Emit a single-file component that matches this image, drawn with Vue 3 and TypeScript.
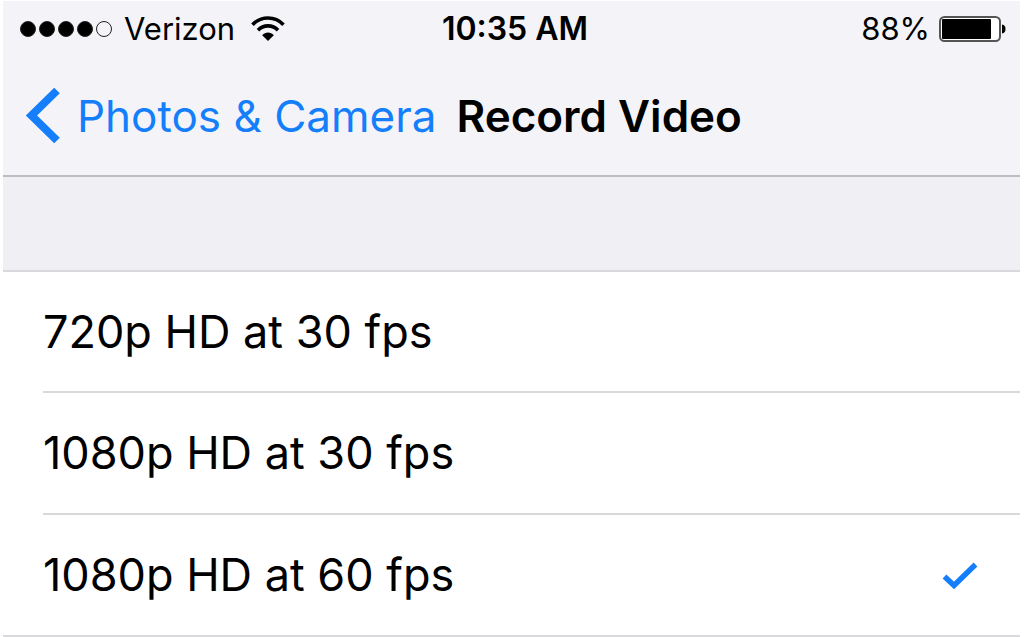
<script setup lang="ts">
import { ref } from 'vue'

interface VideoMode {
  id: string
  label: string
}

const modes: VideoMode[] = [
  { id: '720p30', label: '720p HD at 30 fps' },
  { id: '1080p30', label: '1080p HD at 30 fps' },
  { id: '1080p60', label: '1080p HD at 60 fps' },
]
const selected = ref('1080p60')
const signal = [true, true, true, true, false]
</script>

<template>
  <div class="screen">
    <header class="top">
      <div class="status">
        <div class="carrier">
          <span class="dots">
            <i v-for="(on, n) in signal" :key="n" class="dot" :class="{ on }"></i>
          </span>
          <span>Verizon</span>
          <svg class="wifi" width="34" height="26" viewBox="0 0 34 26" fill="none" stroke="#000" aria-hidden="true">
            <path d="M1.500 8.700C10 -0.200 24 -0.200 32.500 8.700" stroke-width="3.600" />
            <path d="M7 14.200C12.400 8.400 21.600 8.400 27 14.200" stroke-width="3.600" />
            <path d="M11.200 19.200C14.400 15.600 19.600 15.600 22.800 19.200L17 25Z" fill="#000" stroke="none" />
          </svg>
        </div>
        <span class="time">10:35 AM</span>
        <div class="power">
          <span>88%</span>
          <svg width="68" height="28" viewBox="0 0 68 28" aria-hidden="true">
            <rect x="2" y="2" width="60" height="24" rx="4.500" fill="#fff" stroke="#555" stroke-width="2" />
            <rect x="4" y="4" width="49" height="20" rx="1" />
            <path d="M64 9.500C66.500 10 67.500 11.500 67.500 14S66.500 18 64 18.500Z" />
          </svg>
        </div>
      </div>
      <nav class="nav">
        <a class="back" href="#">
          <svg width="36" height="58" viewBox="0 0 36 58" fill="none" aria-hidden="true">
            <path d="M32 3.500L6.500 28.500L32 53.500" stroke="#157efb" stroke-width="8" />
          </svg>
          <span>Photos &amp; Camera</span>
        </a>
        <h1>Record Video</h1>
      </nav>
    </header>
    <main>
      <div class="spacer"></div>
      <div class="list" role="radiogroup" aria-label="Record Video">
        <label v-for="mode in modes" :key="mode.id" class="row">
          <span class="cell">
            <span>{{ mode.label }}</span>
            <input v-model="selected" type="radio" name="mode" :value="mode.id" />
            <svg v-if="selected === mode.id" width="36" height="30" viewBox="0 0 36 30" fill="none" aria-hidden="true">
              <path d="M2.500 16.500L12 25.500L33.500 4.500" stroke="#157efb" stroke-width="5.500" />
            </svg>
          </span>
        </label>
      </div>
    </main>
  </div>
</template>

<style>
body {
  background: #fff;
}
</style>

<style scoped>
.screen {
  margin: 1px 4px 0 3px;
  font-family: Inter, "Liberation Sans", sans-serif;
  color: #000;
}
.top {
  background: #f4f4f8;
  border-bottom: 2px solid #bcbcc2;
}
.status {
  display: grid;
  grid-template-columns: 1fr auto 1fr;
  align-items: center;
  height: 56px;
  padding: 0 14px 0 17px;
  font-size: 31px;
  line-height: 36px;
}
.carrier,
.power {
  display: flex;
  align-items: center;
}
.carrier {
  gap: 12px;
}
.dots {
  display: flex;
  gap: 3px;
}
.dot {
  box-sizing: border-box;
  width: 16px;
  height: 16px;
  border: 1px solid #222;
  border-radius: 50%;
}
.dot.on {
  background: #000;
}
.wifi {
  margin-left: 4px;
}
.time {
  padding-left: 4px;
  font-size: 32px;
  font-weight: 600;
}
.power {
  justify-content: flex-end;
  gap: 8px;
}
.nav {
  display: flex;
  align-items: center;
  height: 118px;
  padding: 0 22px;
  gap: 20px;
  font-size: 44px;
  line-height: 56px;
  white-space: nowrap;
}
.back {
  display: flex;
  align-items: center;
  gap: 16px;
  color: #157efb;
  text-decoration: none;
}
h1 {
  margin: 0;
  font: inherit;
  font-weight: 600;
}
.spacer {
  height: 93px;
  background: #efeff4;
}
.list {
  border-top: 2px solid #d9d9dc;
  border-bottom: 2px solid #d9d9dc;
}
.row {
  display: block;
  padding-left: 40px;
  font-size: 45px;
  line-height: 56px;
}
.cell {
  display: flex;
  align-items: center;
  justify-content: space-between;
  height: 120px;
  padding-right: 42px;
}
.row:first-child .cell {
  height: 119px;
}
.row + .row .cell {
  border-top: 2px solid #d9d9dc;
}
input {
  appearance: none;
  width: 0;
  height: 0;
  margin: 0 auto;
}
</style>
